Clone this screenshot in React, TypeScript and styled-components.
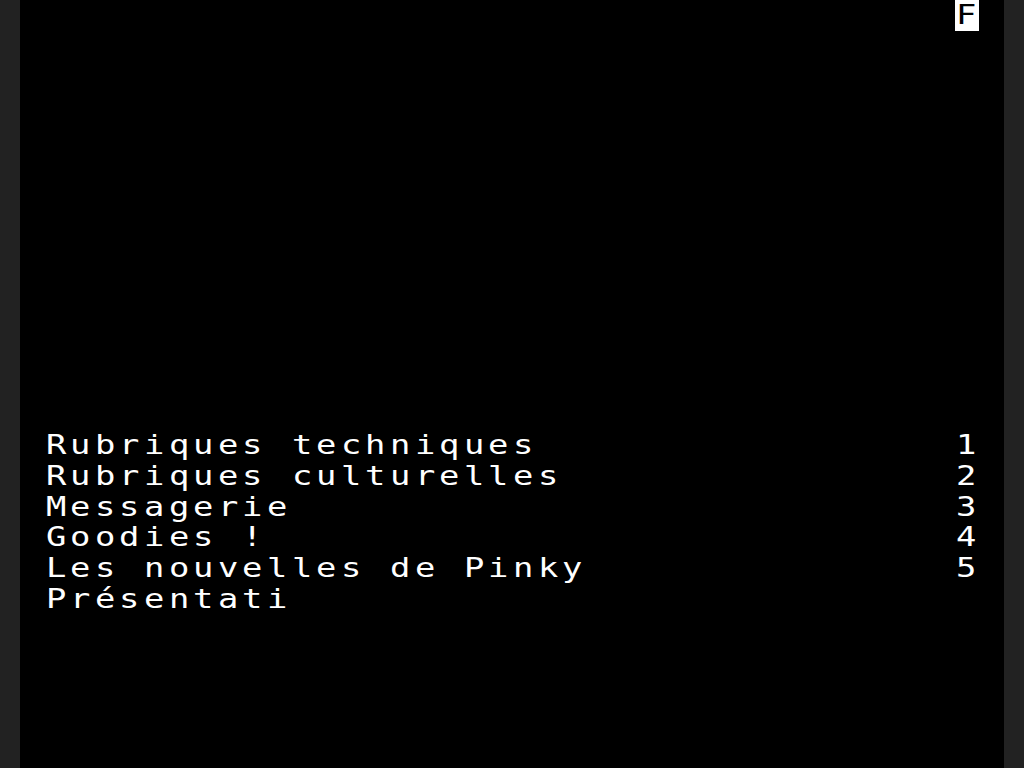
import styled, { createGlobalStyle } from 'styled-components';

const COLS = 40;
const ROWS = 25;

const GlobalStyle = createGlobalStyle`
  html, body {
    margin: 0;
    padding: 0;
    background: #222222;
    overflow: hidden;
  }
`;

const Frame = styled.main`
  width: 1024px;
  height: 768px;
  display: flex;
  justify-content: center;
  background: #222222;
`;

const Screen = styled.section`
  width: 984px;
  height: 768px;
  background: #000000;
  display: grid;
  grid-template-rows: repeat(${ROWS}, 1fr);
`;

const Row = styled.div`
  display: grid;
  grid-template-columns: repeat(${COLS}, 1fr);
  overflow: hidden;
`;

const Cell = styled.span<{ $inverse?: boolean }>`
  display: block;
  overflow: hidden;
  padding-left: 1px;
  color: ${({ $inverse }) => ($inverse ? '#000000' : '#ffffff')};
  background: ${({ $inverse }) => ($inverse ? '#ffffff' : 'transparent')};
`;

// Minitel glyphs are wide, so the mono font is stretched horizontally
const Glyph = styled.span`
  display: inline-block;
  font-family: 'DejaVu Sans Mono', 'Liberation Mono', monospace;
  font-size: 26px;
  line-height: 31px;
  white-space: pre;
  transform: scaleX(1.3);
  transform-origin: left center;
`;

type Line = { text: string; col: number; inverse?: boolean }[];

const screenLines: Record<number, Line> = {
  0: [{ text: 'F', col: 38, inverse: true }],
  14: [
    { text: 'Rubriques techniques', col: 1 },
    { text: '1', col: 38 },
  ],
  15: [
    { text: 'Rubriques culturelles', col: 1 },
    { text: '2', col: 38 },
  ],
  16: [
    { text: 'Messagerie', col: 1 },
    { text: '3', col: 38 },
  ],
  17: [
    { text: 'Goodies !', col: 1 },
    { text: '4', col: 38 },
  ],
  18: [
    { text: 'Les nouvelles de Pinky', col: 1 },
    { text: '5', col: 38 },
  ],
  19: [{ text: 'Présentati', col: 1 }],
};

const buildRow = (line: Line | undefined) => {
  const cells: { ch: string; inverse: boolean }[] = Array.from({ length: COLS }, () => ({
    ch: ' ',
    inverse: false,
  }));
  line?.forEach((part) => {
    part.text.split('').forEach((ch, i) => {
      const idx = part.col + i;
      if (idx < COLS) cells[idx] = { ch, inverse: !!part.inverse };
    });
  });
  return cells;
};

export default function App() {
  return (
    <>
      <GlobalStyle />
      <Frame>
        <Screen>
          {Array.from({ length: ROWS }, (_, r) => (
            <Row key={r}>
              {buildRow(screenLines[r]).map((cell, c) => (
                <Cell key={c} $inverse={cell.inverse}>
                  <Glyph>{cell.ch}</Glyph>
                </Cell>
              ))}
            </Row>
          ))}
        </Screen>
      </Frame>
    </>
  );
}
